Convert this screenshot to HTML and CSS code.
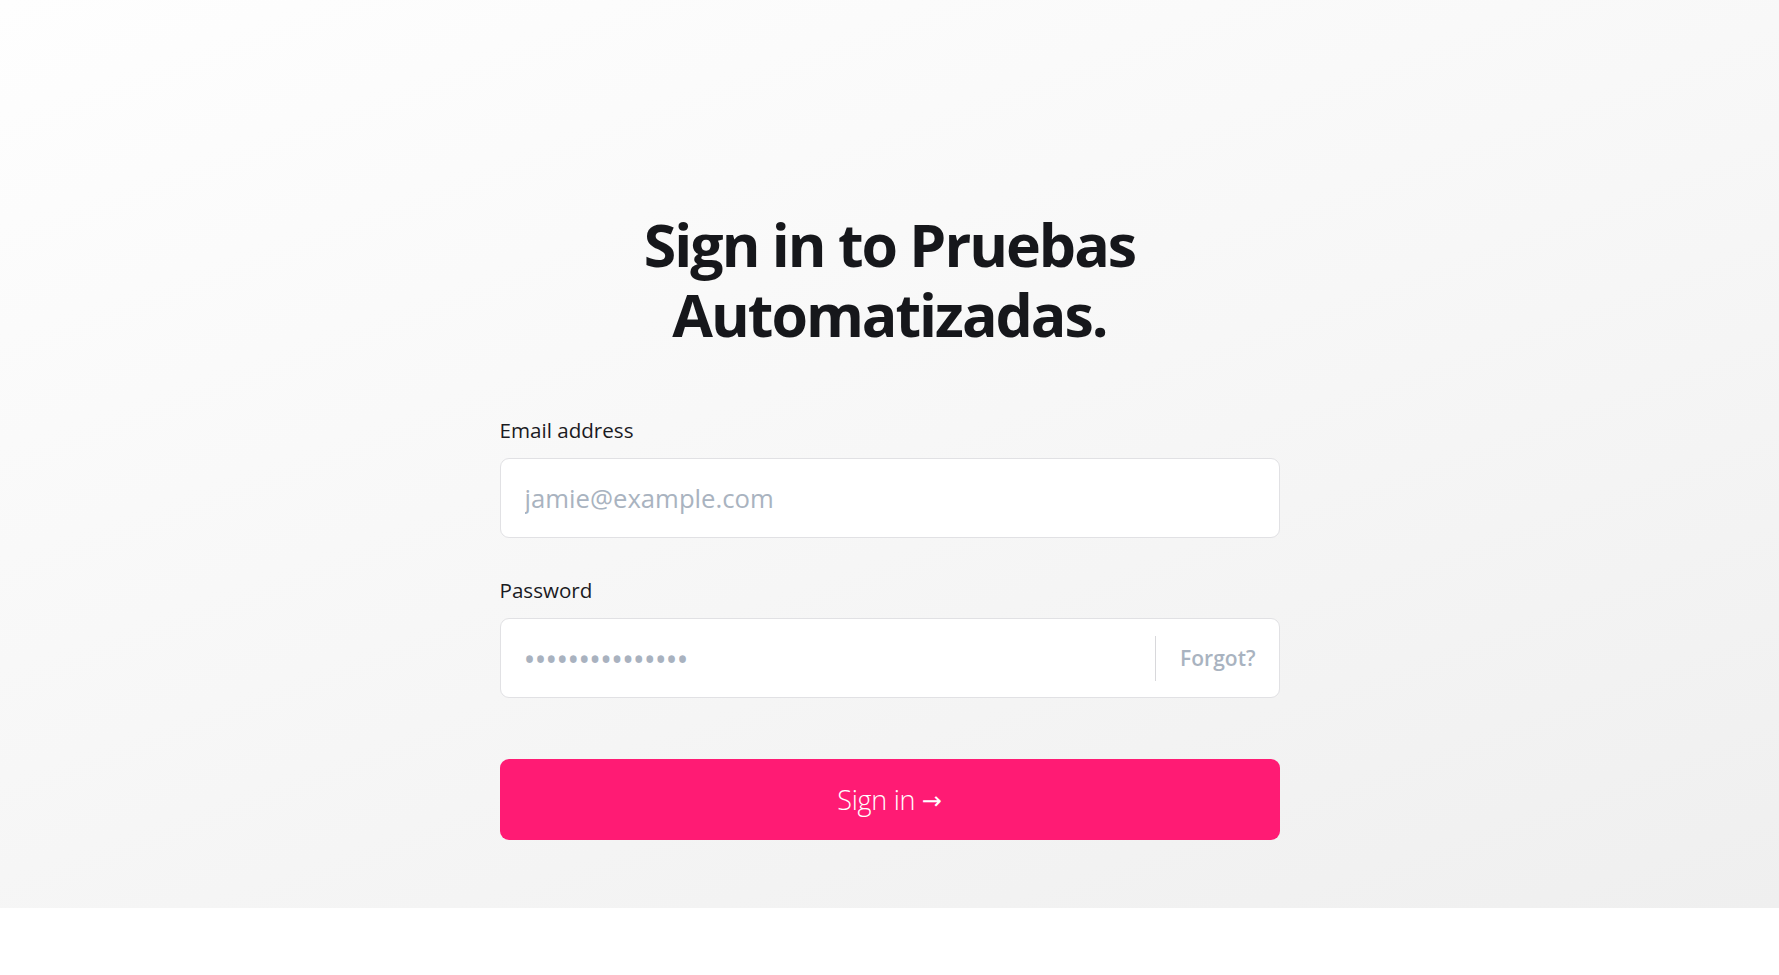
FILE: index.html
```html
<!DOCTYPE html>
<html lang="en">
<head>
<meta charset="utf-8">
<title>Sign in</title>
<link rel="stylesheet" href="styles.css">
</head>
<body>
<main class="hero">
  <div class="panel">
    <h1 class="title"><span class="title-line">Sign in to Pruebas</span><span class="title-line">Automatizadas.</span></h1>
    <form class="form">
      <div class="field">
        <label class="label" for="email">Email address</label>
        <div class="box">
          <input class="control" id="email" type="email" placeholder="jamie@example.com">
        </div>
      </div>
      <div class="field">
        <label class="label" for="password">Password</label>
        <div class="box">
          <input class="control control-pass" id="password" type="password" placeholder="•••••••••••••••">
          <a class="forgot" href="#">Forgot?</a>
        </div>
      </div>
      <button class="submit" type="button">Sign in <span class="arrow">→</span></button>
    </form>
  </div>
</main>
<div class="footer-space"></div>
</body>
</html>
```
FILE: styles.css
```css
* { box-sizing: border-box; }
html, body { margin: 0; padding: 0; background: #ffffff; }
body { font-family: "Open Sans", "Noto Sans", sans-serif; color: #18191d; }

.hero {
  height: 908px;
  background: linear-gradient(160deg, #fefefe 0%, #f7f7f7 50%, #efefef 100%);
  display: flex;
  justify-content: center;
  padding-top: 209px;
}

.panel {
  width: 780px;
  display: flex;
  flex-direction: column;
}

.title {
  margin: 0 0 67px;
  text-align: center;
  font-size: 59px;
  font-weight: 700;
  letter-spacing: -2px;
  color: #16171b;
}
.title-line {
  display: block;
  height: 70px;
  line-height: 70px;
}

.form {
  display: flex;
  flex-direction: column;
  gap: 38px;
}

.field {
  display: flex;
  flex-direction: column;
  gap: 14px;
}

.label {
  font-size: 20.6px;
  line-height: 28px;
  color: #1b1b1f;
  letter-spacing: 0;
}

.box {
  height: 80px;
  display: flex;
  align-items: center;
  background: #ffffff;
  border: 1px solid #e1e1e4;
  border-radius: 9px;
}

.control {
  flex: 1;
  min-width: 0;
  height: 100%;
  border: 0;
  outline: 0;
  background: transparent;
  padding: 0 24px;
  font-family: "Open Sans", "Noto Sans", sans-serif;
  font-size: 25.7px;
  letter-spacing: 0;
  color: #1b1b1f;
  border-radius: 9px;
}
.control::placeholder { color: #a9b3c0; opacity: 1; }

.control-pass { padding-left: 23px; font-size: 32px; letter-spacing: -1.1px; }
.control-pass::placeholder { color: #a9b2bf; }

.forgot {
  align-self: center;
  height: 45px;
  display: flex;
  align-items: center;
  padding: 0 23px 0 24px;
  border-left: 1px solid #d8d8db;
  font-size: 21px;
  font-weight: 600;
  color: #a9b3c0;
  text-decoration: none;
  letter-spacing: 0;
}

.submit {
  margin-top: 23px;
  height: 81px;
  border: 0;
  border-radius: 9px;
  background: #ff1b74;
  color: #ffffff;
  font-family: "Open Sans", "Noto Sans", sans-serif;
  font-size: 27px;
  font-weight: 300;
  letter-spacing: -0.3px;
  cursor: pointer;
}
.arrow {
  font-family: "DejaVu Sans", sans-serif;
  font-size: 24px;
  font-weight: 400;
  position: relative;
  top: -1px;
}

.footer-space { height: 67px; background: #ffffff; }
```
